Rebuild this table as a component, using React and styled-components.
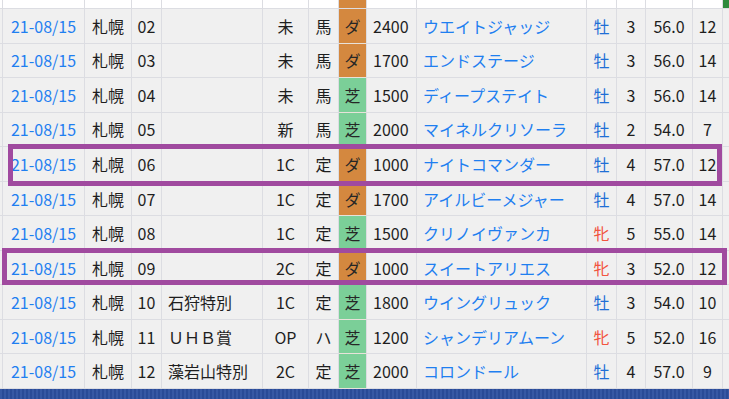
import React from "react";
import styled, { createGlobalStyle, css } from "styled-components";

const Global = createGlobalStyle`
  html, body { margin: 0; padding: 0; background: #ffffff; }
  body { font-family: "Noto Sans CJK JP", "Noto Sans", sans-serif; }
`;

const COLS = "3px 82px 47px 30px 101px 46px 30px 28px 50px 170px 30px 29px 47px 30px 6px";
const LINE = "#dcdde2";

const Page = styled.div`
  width: 729px;
  height: 399px;
  display: flex;
  flex-direction: column;
  overflow: hidden;
`;

const HeaderStrip = styled.div`
  display: grid;
  grid-template-columns: ${COLS};
  height: 9px;
  flex: none;
`;

const StripCell = styled.div`
  box-sizing: border-box;
  border-right: 1px solid ${LINE};
  border-bottom: 1px solid ${LINE};
  background: ${(p) => p.$bg || "#ffffff"};
  ${(p) => p.$last && css`border-right: none;`}
`;

const Body = styled.div`
  height: 380px;
  flex: none;
  display: flex;
  flex-direction: column;
`;

const Row = styled.div`
  flex: 1;
  display: grid;
  grid-template-columns: ${COLS};
  position: relative;
`;

const Cell = styled.div`
  box-sizing: border-box;
  border-right: 1px solid ${LINE};
  border-bottom: 1px solid ${LINE};
  background: #f0f0f0;
  display: flex;
  align-items: center;
  justify-content: ${(p) => (p.$left ? "flex-start" : "center")};
  padding-left: ${(p) => (p.$left ? "6px" : "0")};
  font-size: 16px;
  color: #1e1e1e;
  white-space: nowrap;
  overflow: hidden;
  ${(p) => p.$last && css`border-right: none;`}
`;

const DateCell = styled(Cell)`
  color: #1f7ff0;
`;

const HorseCell = styled(Cell)`
  color: #1f7ff0;
`;

const SexCell = styled(Cell)`
  color: ${(p) => (p.$female ? "#f2553f" : "#1f6fd6")};
`;

const TrackCell = styled(Cell)`
  background: ${(p) => (p.$dirt ? "#d4883f" : "#7bcf98")};
  border-bottom-color: #e8e2da;
  color: #262626;
`;

const DistCell = styled(Cell)`
  justify-content: flex-start;
  padding-left: 6px;
`;

const Highlight = styled.div`
  position: absolute;
  top: ${(p) => p.$top}px;
  bottom: ${(p) => p.$bottom}px;
  left: ${(p) => p.$l}px;
  right: ${(p) => p.$r}px;
  border: 5px solid #a04a9f;
  box-sizing: border-box;
  pointer-events: none;
  z-index: 2;
`;

const BottomBand = styled.div`
  flex: 1;
  background-color: #2c4f9f;
  background-image: repeating-linear-gradient(
    90deg,
    rgba(255, 255, 255, 0.05) 0px,
    rgba(255, 255, 255, 0.05) 2px,
    rgba(0, 0, 0, 0.05) 2px,
    rgba(0, 0, 0, 0.05) 4px
  );
`;

const rows = [
  { no: "02", name: "", cls: "未", cond: "馬", dirt: true, dist: "2400", horse: "ウエイトジャッジ", f: false, age: 3, w: "56.0", n: 12 },
  { no: "03", name: "", cls: "未", cond: "馬", dirt: true, dist: "1700", horse: "エンドステージ", f: false, age: 3, w: "56.0", n: 14 },
  { no: "04", name: "", cls: "未", cond: "馬", dirt: false, dist: "1500", horse: "ディープステイト", f: false, age: 3, w: "56.0", n: 14 },
  { no: "05", name: "", cls: "新", cond: "馬", dirt: false, dist: "2000", horse: "マイネルクリソーラ", f: false, age: 2, w: "54.0", n: 7 },
  { no: "06", name: "", cls: "1C", cond: "定", dirt: true, dist: "1000", horse: "ナイトコマンダー", f: false, age: 4, w: "57.0", n: 12, hl: { top: -3, bottom: -4, l: 8, r: 7 } },
  { no: "07", name: "", cls: "1C", cond: "定", dirt: true, dist: "1700", horse: "アイルビーメジャー", f: false, age: 4, w: "57.0", n: 14 },
  { no: "08", name: "", cls: "1C", cond: "定", dirt: false, dist: "1500", horse: "クリノイヴァンカ", f: true, age: 5, w: "55.0", n: 14 },
  { no: "09", name: "", cls: "2C", cond: "定", dirt: true, dist: "1000", horse: "スイートアリエス", f: true, age: 3, w: "52.0", n: 12, hl: { top: -3, bottom: 0, l: 2, r: 2 } },
  { no: "10", name: "石狩特別", cls: "1C", cond: "定", dirt: false, dist: "1800", horse: "ウイングリュック", f: false, age: 3, w: "54.0", n: 10 },
  { no: "11", name: "ＵＨＢ賞", cls: "OP", cond: "ハ", dirt: false, dist: "1200", horse: "シャンデリアムーン", f: true, age: 5, w: "52.0", n: 16 },
  { no: "12", name: "藻岩山特別", cls: "2C", cond: "定", dirt: false, dist: "2000", horse: "コロンドール", f: false, age: 4, w: "57.0", n: 9 },
];

export default function App() {
  const strip = Array.from({ length: 15 }, (_, i) => i);
  return (
    <>
      <Global />
      <Page>
        <HeaderStrip>
          {strip.map((i) => (
            <StripCell
              key={i}
              $bg={i === 7 ? "#d4883f" : i === 14 ? "#2e8b3c" : undefined}
              $last={i === 14}
            />
          ))}
        </HeaderStrip>
        <Body>
          {rows.map((r) => (
            <Row key={r.no}>
              <Cell />
              <DateCell>21-08/15</DateCell>
              <Cell>札幌</Cell>
              <Cell>{r.no}</Cell>
              <Cell $left>{r.name}</Cell>
              <Cell>{r.cls}</Cell>
              <Cell>{r.cond}</Cell>
              <TrackCell $dirt={r.dirt}>{r.dirt ? "ダ" : "芝"}</TrackCell>
              <DistCell>{r.dist}</DistCell>
              <HorseCell $left>{r.horse}</HorseCell>
              <SexCell $female={r.f}>{r.f ? "牝" : "牡"}</SexCell>
              <Cell>{r.age}</Cell>
              <Cell>{r.w}</Cell>
              <Cell>{r.n}</Cell>
              <Cell $last />
              {r.hl && (
                <Highlight $top={r.hl.top} $bottom={r.hl.bottom} $l={r.hl.l} $r={r.hl.r} />
              )}
            </Row>
          ))}
        </Body>
        <BottomBand />
      </Page>
    </>
  );
}
